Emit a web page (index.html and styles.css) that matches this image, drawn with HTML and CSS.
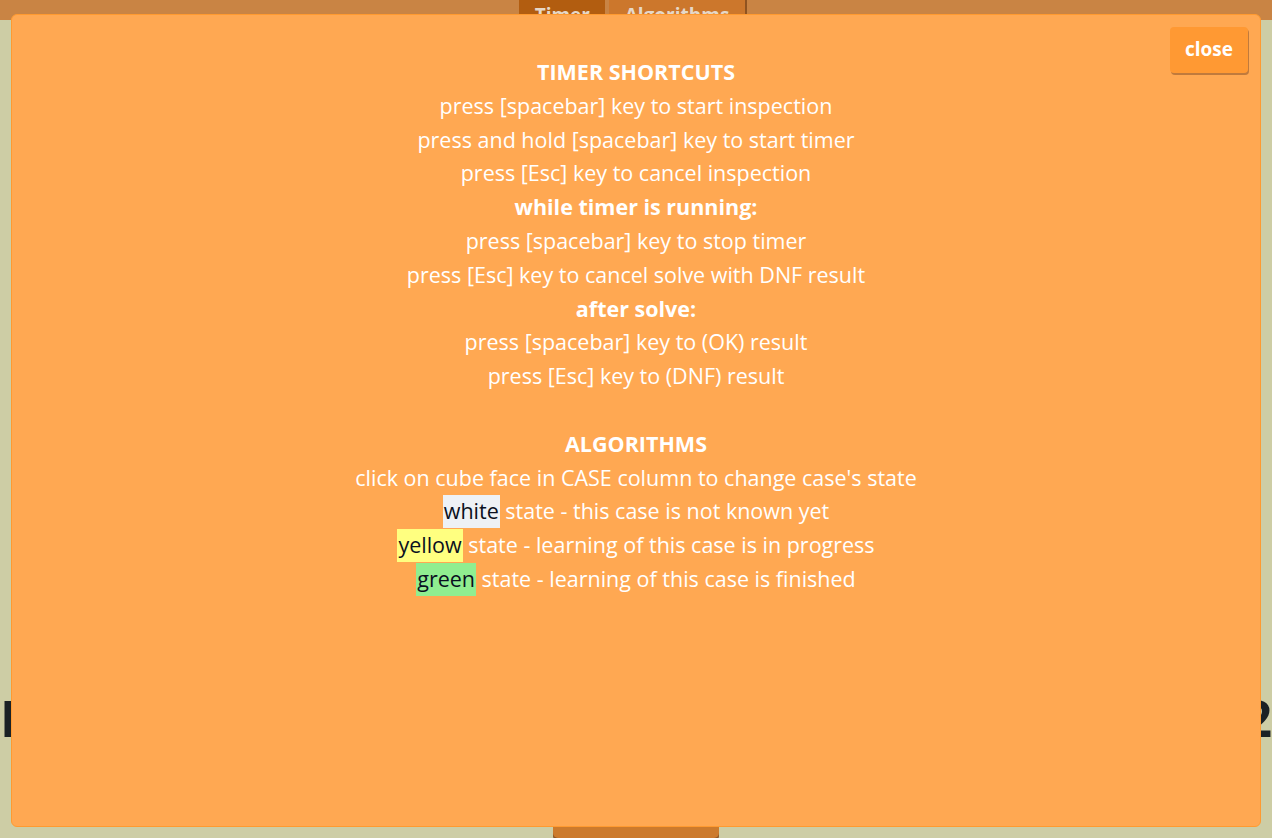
FILE: index.html
```html
<!DOCTYPE html>
<html>
<head>
<meta charset="utf-8">
<link rel="stylesheet" href="styles.css">
</head>
<body>
<div class="page">
  <header class="topbar">
    <div class="tabs">
      <button class="tab tab-active">Timer</button>
      <button class="tab">Algorithms</button>
    </div>
  </header>
  <main class="content">
    <h1 class="big"><span>D</span><span>2</span></h1>
    <div class="bottom"><button class="start">Start</button></div>
  </main>
</div>
<div class="overlay">
  <div class="modal">
    <button class="close">close</button>
    <div class="help">
      <p class="b">TIMER SHORTCUTS</p>
      <p>press [spacebar] key to start inspection</p>
      <p>press and hold [spacebar] key to start timer</p>
      <p>press [Esc] key to cancel inspection</p>
      <p class="b">while timer is running:</p>
      <p>press [spacebar] key to stop timer</p>
      <p>press [Esc] key to cancel solve with DNF result</p>
      <p class="b">after solve:</p>
      <p>press [spacebar] key to (OK) result</p>
      <p>press [Esc] key to (DNF) result</p>
      <p>&nbsp;</p>
      <p class="b">ALGORITHMS</p>
      <p>click on cube face in CASE column to change case's state</p>
      <p><span class="hl hl-white">white</span> state - this case is not known yet</p>
      <p><span class="hl hl-yellow">yellow</span> state - learning of this case is in progress</p>
      <p><span class="hl hl-green">green</span> state - learning of this case is finished</p>
    </div>
  </div>
</div>
</body>
</html>
```
FILE: styles.css
```css
html, body {
  margin: 0;
  padding: 0;
  width: 1272px;
  height: 838px;
  overflow: hidden;
  background: #cdcda5;
  font-family: "Open Sans", "Noto Sans", sans-serif;
}
.page {
  display: flex;
  flex-direction: column;
  height: 838px;
}
.topbar {
  height: 44px;
  background: #c98444;
  display: flex;
  justify-content: center;
}
.tabs {
  display: flex;
  gap: 4px;
  height: 16px;
  margin-left: -6px;
}
.tab {
  border: none;
  font-family: inherit;
  font-weight: 700;
  font-size: 19px;
  color: #e6d8c8;
  padding: 0 16px;
  height: 16px;
  background: #cc772c;
  border-right: 2px solid #8f5320;
  overflow: hidden;
  line-height: 30px;
}
.tab-active {
  background: #b25d10;
  border-right: none;
  width: 86px;
}
.content {
  flex: 1;
  display: flex;
  flex-direction: column;
}
.big {
  margin: 668px 0 0 0;
  display: flex;
  justify-content: space-between;
  font-size: 50px;
  font-weight: 700;
  color: #1b2125;
  line-height: 60px;
}
.bottom {
  display: flex;
  justify-content: center;
  margin-top: 40px;
}
.start {
  width: 166px;
  height: 50px;
  border: none;
  border-radius: 5px;
  background: #cc7a2c;
  box-shadow: 0 3px 0 #8e5624;
  color: #fff;
  font-family: inherit;
  font-weight: 700;
  font-size: 20px;
}
.overlay {
  position: absolute;
  top: 0;
  left: 0;
  width: 1272px;
  height: 838px;
}
.modal {
  position: absolute;
  left: 11px;
  top: 14px;
  width: 1248px;
  height: 811px;
  background: #ffa852;
  border: 1px solid #ff9a30;
  border-radius: 6px;
  display: flex;
  flex-direction: column;
  align-items: center;
}
.close {
  position: absolute;
  top: 12px;
  right: 12px;
  width: 78px;
  height: 46px;
  background: #ff9933;
  border: none;
  border-radius: 4px;
  box-shadow: 1px 2px 0 #c07a3c;
  color: #fff;
  font-family: inherit;
  font-weight: 700;
  font-size: 19px;
  padding: 0 0 2px 0;
}
.help {
  margin-top: 40px;
  text-align: center;
  color: #fff;
  font-size: 21.5px;
  line-height: 33.8px;
}
.help p {
  margin: 0;
}
.b {
  font-weight: 700;
}
.hl {
  color: #0a1020;
  padding: 1px 1px 3px;
}
.hl-white { background: #eef1f5; }
.hl-yellow { background: #ffff80; }
.hl-green { background: #90ee90; }
```
